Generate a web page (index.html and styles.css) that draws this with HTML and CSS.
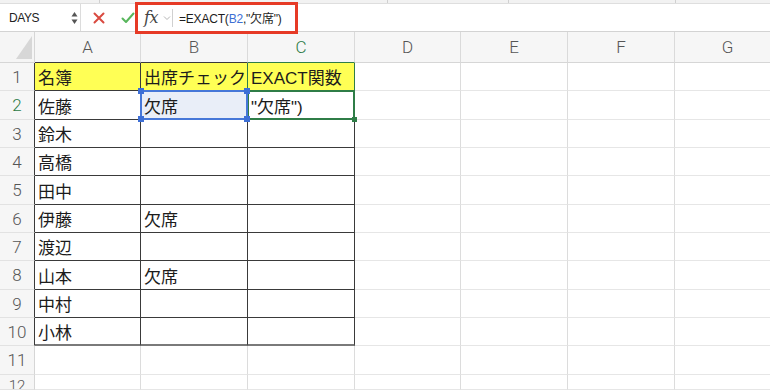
FILE: index.html
```html
<!DOCTYPE html>
<html lang="ja">
<head>
<meta charset="utf-8">
<link rel="stylesheet" href="styles.css">
</head>
<body>
<div class="app">
  <div class="topstrip">
    <span class="tdiv d1"></span><span class="tdiv d2"></span><span class="tdiv d3"></span><span class="tdiv d4"></span>
  </div>
  <div class="fbar">
    <div class="namebox">
      <span class="nbtext">DAYS</span>
      <span class="arrows"><svg width="7" height="14" viewBox="0 0 7 14"><path d="M3.5 1 L6.5 5.5 L0.5 5.5 Z" fill="#555"/><path d="M3.5 13 L6.5 8.5 L0.5 8.5 Z" fill="#555"/></svg></span>
    </div>
    <div class="btns">
      <svg class="xbtn" width="12" height="12" viewBox="0 0 12 12"><path d="M1.5 1.5 L10.5 10.5 M10.5 1.5 L1.5 10.5" stroke="#d94a40" stroke-width="2" stroke-linecap="round"/></svg>
      <svg class="okbtn" width="14" height="12" viewBox="0 0 14 12"><path d="M1.5 6.5 L5 10 L12.5 1.5" stroke="#58b65c" stroke-width="2" fill="none" stroke-linecap="round" stroke-linejoin="round"/></svg>
    </div>
    <div class="formula">
      <span class="fx">fx</span>
      <svg class="chev" width="8" height="6" viewBox="0 0 8 6"><path d="M1 1.5 L4 4.5 L7 1.5" stroke="#b5b5b5" stroke-width="1" fill="none"/></svg>
      <span class="fsep"></span>
      <span class="ftext">=EXACT(<span class="ref">B2</span>,"欠席")</span>
    </div>
    <div class="annot"></div>
  </div>
  <div class="sheet">
    <div class="corner"><span class="tri"></span></div>
    <div class="ch tb">A</div>
    <div class="ch tb">B</div>
    <div class="ch act">C</div>
    <div class="ch">D</div>
    <div class="ch">E</div>
    <div class="ch">F</div>
    <div class="ch">G</div>

    <div class="rh tl">1</div>
    <div class="c t y">名簿</div>
    <div class="c t y gr">出席チェック</div>
    <div class="c t y gr">EXACT関数</div>
    <div class="c"></div><div class="c"></div><div class="c"></div><div class="c"></div>

    <div class="rh tl act">2</div>
    <div class="c t">佐藤</div>
    <div class="c t refcell">欠席<span class="refbox"><i class="h h1"></i><i class="h h2"></i><i class="h h3"></i><i class="h h4"></i></span></div>
    <div class="c t actcell">"欠席")<span class="activebox"><i class="ah"></i></span></div>
    <div class="c"></div><div class="c"></div><div class="c"></div><div class="c"></div>

    <div class="rh tl">3</div>
    <div class="c t">鈴木</div><div class="c t"></div><div class="c t"></div>
    <div class="c"></div><div class="c"></div><div class="c"></div><div class="c"></div>

    <div class="rh tl">4</div>
    <div class="c t">高橋</div><div class="c t"></div><div class="c t"></div>
    <div class="c"></div><div class="c"></div><div class="c"></div><div class="c"></div>

    <div class="rh tl">5</div>
    <div class="c t">田中</div><div class="c t"></div><div class="c t"></div>
    <div class="c"></div><div class="c"></div><div class="c"></div><div class="c"></div>

    <div class="rh tl">6</div>
    <div class="c t">伊藤</div><div class="c t">欠席</div><div class="c t"></div>
    <div class="c"></div><div class="c"></div><div class="c"></div><div class="c"></div>

    <div class="rh tl">7</div>
    <div class="c t">渡辺</div><div class="c t"></div><div class="c t"></div>
    <div class="c"></div><div class="c"></div><div class="c"></div><div class="c"></div>

    <div class="rh tl">8</div>
    <div class="c t">山本</div><div class="c t">欠席</div><div class="c t"></div>
    <div class="c"></div><div class="c"></div><div class="c"></div><div class="c"></div>

    <div class="rh tl">9</div>
    <div class="c t">中村</div><div class="c t"></div><div class="c t"></div>
    <div class="c"></div><div class="c"></div><div class="c"></div><div class="c"></div>

    <div class="rh tl">10</div>
    <div class="c t last">小林</div><div class="c t last"></div><div class="c t last"></div>
    <div class="c"></div><div class="c"></div><div class="c"></div><div class="c"></div>

    <div class="rh">11</div>
    <div class="c"></div><div class="c"></div><div class="c"></div>
    <div class="c"></div><div class="c"></div><div class="c"></div><div class="c"></div>

    <div class="rh rh12">12</div>
    <div class="c"></div><div class="c"></div><div class="c"></div>
    <div class="c"></div><div class="c"></div><div class="c"></div><div class="c"></div>
  </div>
</div>
</body>
</html>
```
FILE: styles.css
```css
* { box-sizing: border-box; }
html, body { margin: 0; padding: 0; }
body {
  width: 770px;
  height: 390px;
  overflow: hidden;
  background: #fff;
  font-family: "Liberation Sans", "Noto Sans CJK JP", sans-serif;
}
.app { width: 770px; height: 390px; overflow: hidden; }

.topstrip {
  height: 4px;
  background: #f2f2f2;
  border-bottom: 1px solid #dedede;
  position: relative;
}
.tdiv { position: absolute; top: 0; width: 1px; height: 3px; background: #d0d0d0; }
.d1 { left: 99px; } .d2 { left: 387px; } .d3 { left: 508px; } .d4 { left: 675px; }

.fbar {
  height: 28px;
  display: flex;
  align-items: center;
  background: #fff;
  border-bottom: 1px solid #d3d3d3;
  position: relative;
}
.namebox {
  width: 81px;
  height: 100%;
  display: flex;
  align-items: center;
  justify-content: space-between;
  padding: 0 2px 0 9px;
  border-right: 1px solid #dcdcdc;
  background: #fff;
}
.nbtext {
  font-family: "Liberation Sans", Arial, sans-serif;
  font-size: 12px;
  letter-spacing: -0.4px;
  color: #222;
}
.arrows { display: flex; align-items: center; }
.btns {
  display: flex;
  align-items: center;
  gap: 16px;
  padding-left: 12px;
  width: 57px;
}
.formula {
  display: flex;
  align-items: center;
  height: 100%;
  padding-left: 6px;
}
.fx {
  font-family: "DejaVu Serif", "Liberation Serif", serif;
  font-style: italic;
  font-size: 16px;
  color: #444;
  width: 16px;
  letter-spacing: -0.5px;
}
.chev { margin-left: 3px; }
.fsep { width: 1px; height: 18px; background: #d0d0d0; margin: 0 6px 0 1px; }
.ftext {
  font-family: "Liberation Sans", Arial, "Noto Sans CJK JP", sans-serif;
  font-size: 12px;
  color: #1d1d1d;
  letter-spacing: -0.2px;
}
.ref { color: #3c6fd4; }
.annot {
  position: absolute;
  left: 135px;
  top: -2px;
  width: 163px;
  height: 32px;
  border: 3px solid #e63a26;
  pointer-events: none;
}

.sheet {
  display: grid;
  grid-template-columns: 35px 106px 107px 107px 106px 107px 107px 106px;
  grid-template-rows: 31px 28px 29px 28px 28px 29px 28px 28px 29px 28px 28px 29px 15px;
  background: #fff;
}
.corner {
  background: #f5f5f5;
  border-right: 1px solid #d6d6d6;
  border-bottom: 1px solid #d6d6d6;
  position: relative;
}
.tri {
  position: absolute;
  right: 2px;
  bottom: 3px;
  width: 0;
  height: 0;
  border-left: 16px solid transparent;
  border-bottom: 23px solid #d7d7d7;
}
.ch {
  background: #f6f6f6;
  border-right: 1px solid #dadada;
  border-bottom: 1px solid #d6d6d6;
  display: flex;
  align-items: center;
  justify-content: center;
  font-family: "Roboto", "Liberation Sans", sans-serif;
  font-weight: 300;
  font-size: 17px;
  color: #555;
}
.ch.tb { border-bottom-color: #3a3a3a; }
.ch.act { color: #2c7a45; border-bottom-color: #2f7d47; }
.rh {
  background: #f6f6f6;
  border-right: 1px solid #d6d6d6;
  border-bottom: 1px solid #e2e2e2;
  display: flex;
  align-items: center;
  justify-content: center;
  font-family: "Roboto", "Liberation Sans", sans-serif;
  font-weight: 300;
  font-size: 17px;
  color: #555;
}
.rh.tl { border-right-color: #3a3a3a; }
.rh.act { color: #2c7a45; }
.rh12 { align-items: flex-start; padding-top: 4px; font-size: 15px; line-height: 15px; overflow: hidden; }

.c {
  border-right: 1px solid #dcdcdc;
  border-bottom: 1px solid #e6e6e6;
  font-size: 17px;
  color: #1c1c1c;
  padding-left: 3px;
  display: flex;
  align-items: center;
  white-space: nowrap;
  position: relative;
}
.c.t { border-right-color: #3a3a3a; border-bottom-color: #3a3a3a; overflow: hidden; }
.c.y { background: #ffff55; }
.c.gr { border-right-color: #2f7d47; }
.c.last { border-bottom: 2px solid #7a7a7a; }

.refcell { background: #e9eef8; overflow: visible !important; }
.actcell { overflow: visible !important; }
.refbox {
  position: absolute;
  left: -1px;
  top: -1px;
  right: -1px;
  bottom: -1px;
  border: 2px solid #4677d8;
  z-index: 2;
}
.h {
  position: absolute;
  width: 6px;
  height: 6px;
  background: #3d6fd6;
}
.h1 { left: -4px; top: -4px; }
.h2 { right: -4px; top: -4px; }
.h3 { left: -4px; bottom: -4px; }
.h4 { right: -4px; bottom: -4px; }
.activebox {
  position: absolute;
  left: -1px;
  top: -1px;
  right: -1px;
  bottom: -1px;
  border: 2px solid #2f7d47;
  z-index: 1;
}
.ah {
  position: absolute;
  right: -4px;
  bottom: -4px;
  width: 5px;
  height: 5px;
  background: #2f7d47;
}
```
